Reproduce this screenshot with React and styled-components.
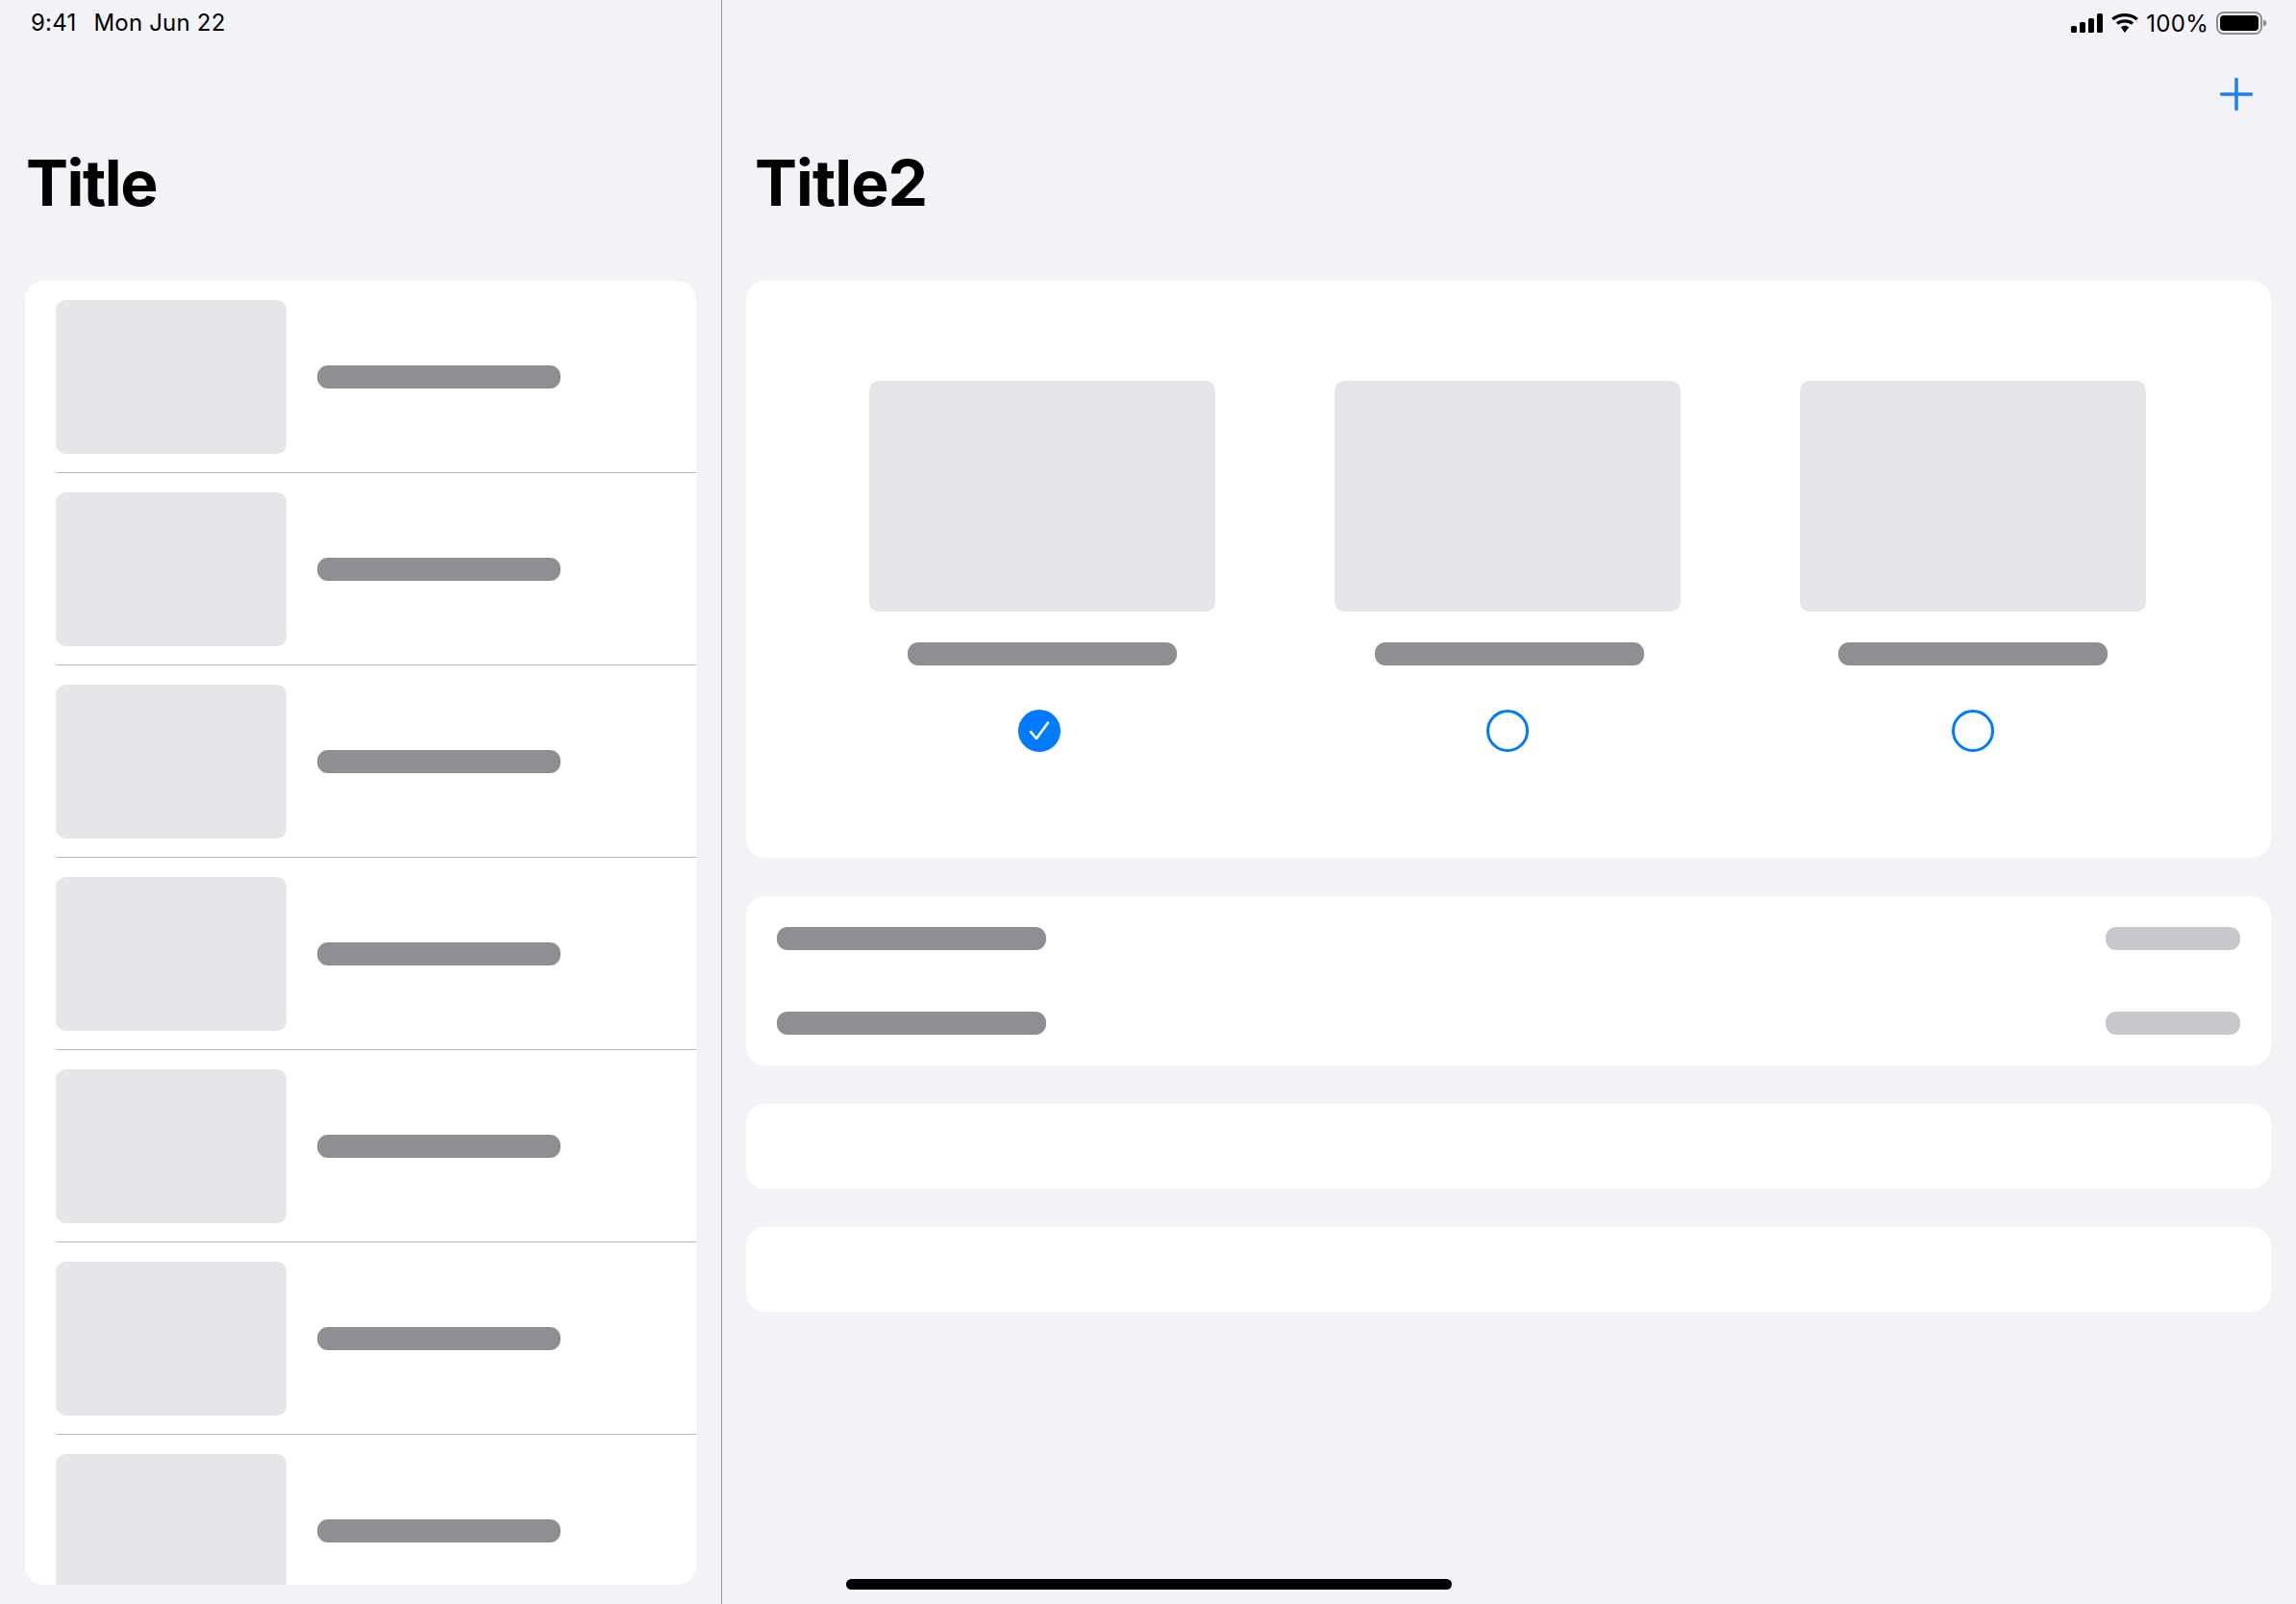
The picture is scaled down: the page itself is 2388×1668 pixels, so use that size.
import React from "react";
import styled, { createGlobalStyle } from "styled-components";

const Global = createGlobalStyle`
  html, body { margin: 0; padding: 0; background: #f2f2f7; }
  body { font-family: "Inter", "Liberation Sans", sans-serif; color: #000; }
  * { box-sizing: border-box; }
`;
const Page = styled.div`
  position: relative; display: flex; width: 2388px; height: 1668px; overflow: hidden; background: #f2f2f7;
`;
const Sidebar = styled.aside`
  width: 751px; height: 100%; flex: none; display: flex; flex-direction: column; border-right: 1px solid #9a9a9f;
  padding: 0 26px 20px 26px;
`;
const Main = styled.main`
  flex: 1; display: flex; flex-direction: column; padding: 0 26px 0 25px; min-width: 0;
`;
const StatusLeft = styled.div`
  height: 48px; display: flex; align-items: center; gap: 18px; padding-left: 6px; font-size: 24px; line-height: 48px; letter-spacing: 0.2px;
`;
const StatusRight = styled.div`
  height: 48px; display: flex; align-items: center; justify-content: flex-end; gap: 8px; margin-right: 4px; font-size: 24px; letter-spacing: 0.3px;
`;
const NavBar = styled.div`
  height: 100px; padding: 0 19px 0 0; display: flex; align-items: center; justify-content: flex-end;
`;
const Title = styled.h1`
  margin: 0; height: 144px; padding: 0 0 0 ${(p) => p.$inset}px; font-size: 66px; font-weight: 700; line-height: 84px; letter-spacing: ${(p) => p.$track}px;
`;
const ListCard = styled.div`
  flex: 1; min-height: 0; background: #fff; border-radius: 20px; overflow: hidden;
`;
const Row = styled.div`
  height: 200px; margin-left: 32px; padding: 20px 0; display: flex; align-items: center; gap: 32px; border-bottom: 1px solid #b9b9bd;
`;
const Thumb = styled.div`
  flex: none; width: ${(p) => p.$w}px; height: ${(p) => p.$h}px; background: #e5e5ea; border-radius: 10px;
`;
const Bar = styled.div`
  flex: none; width: ${(p) => p.$w}px; height: 24px; border-radius: 11px; background: ${(p) => (p.$light ? "#c7c7cc" : "#8e8e93")};
`;
const Card = styled.section`
  background: #fff; border-radius: 20px; margin-bottom: 40px;
`;
const PickerCard = styled(Card)`
  height: 600px; display: grid; grid-template-columns: repeat(3, 360px); column-gap: 124px; padding: 104px 0 0 128px;
`;
const Option = styled.div`
  display: flex; flex-direction: column; align-items: center;
`;
const OptionBar = styled(Bar)`
  margin-top: 32px; transform: translateX(${(p) => p.$shift}px);
`;
const Radio = styled.div`
  margin-top: 46px; width: 44px; height: 44px; border-radius: 50%; border: 3px solid #007aff;
  background: ${(p) => (p.$on ? "#007aff" : "transparent")}; display: flex; align-items: center; justify-content: center;
  transform: translateX(${(p) => p.$shift}px);
`;
const InfoCard = styled(Card)`
  height: 176px; padding: 32px; display: flex; flex-direction: column; gap: 64px;
`;
const InfoRow = styled.div`display: flex; justify-content: space-between; align-items: center;`;
const EmptyCard = styled(Card)`height: 88px;`;
const HomeIndicator = styled.div`
  position: absolute; left: 880px; top: 1642px; width: 630px; height: 11px; border-radius: 6px; background: #000;
`;

const Signal = () => (
  <svg width="33" height="20" viewBox="0 0 33 20" style={{ marginRight: 1 }}>
    <rect x="0" y="13" width="6" height="7" rx="1.6" /><rect x="9" y="9" width="6" height="11" rx="1.6" />
    <rect x="18" y="5" width="6" height="15" rx="1.6" /><rect x="27" y="0" width="6" height="20" rx="1.6" />
  </svg>
);
const Wifi = () => (
  <svg width="28" height="20" viewBox="1.5 0 25 20" preserveAspectRatio="none">
    <path d="M14 3.2c4 0 7.6 1.5 10.3 4l2.1-2.3C23.1 1.9 18.8 0 14 0S4.900 1.900 1.600 4.900l2.100 2.300C6.400 4.700 10 3.200 14 3.200z" />
    <path d="M14 9.500c2.300 0 4.400.9 6 2.300l2.200-2.300C20 7.500 17.100 6.300 14 6.300s-6 1.200-8.200 3.200L8 11.800c1.600-1.400 3.700-2.300 6-2.300z" />
    <path d="M14 12.700c-1.500 0-2.800.6-3.800 1.500L14 20l3.800-5.800c-1-.9-2.300-1.500-3.800-1.500z" />
  </svg>
);
const Battery = () => (
  <svg width="53" height="24" viewBox="0 0 53 24">
    <rect x="1" y="1" width="46" height="22" rx="6.500" fill="none" stroke="#8e8e93" strokeWidth="2" />
    <rect x="4" y="4" width="40" height="16" rx="4" fill="#000" />
    <path d="M49 8.500c2 .5 3.500 1.900 3.500 3.500s-1.500 3-3.500 3.500z" fill="#8e8e93" />
  </svg>
);
const Plus = () => (
  <svg width="34" height="34" viewBox="0 0 34 34">
    <path d="M17 1.500v31M1.500 17h31" stroke="#1c7ff2" strokeWidth="3.500" strokeLinecap="round" fill="none" />
  </svg>
);
const Check = () => (
  <svg width="24" height="22" viewBox="0 0 24 22">
    <path d="M3 12l6 7L21 2.500" stroke="#fff" strokeWidth="2.600" strokeLinecap="round" strokeLinejoin="round" fill="none" />
  </svg>
);

const opts = [
  { barShift: 0, radioShift: -3, on: true },
  { barShift: 2, radioShift: 0, on: false },
  { barShift: 0, radioShift: 0, on: false },
];

export default function App() {
  return (
    <Page>
      <Global />
      <Sidebar>
        <StatusLeft><span>9:41</span><span>Mon Jun 22</span></StatusLeft>
        <NavBar />
        <Title $inset={1} $track={-1.5}>Title</Title>
        <ListCard>
          {Array.from({ length: 7 }, (_, i) => (
            <Row key={i}><Thumb $w={240} $h={160} /><Bar $w={253} /></Row>
          ))}
        </ListCard>
      </Sidebar>
      <Main>
        <StatusRight><Signal /><Wifi /><span>100%</span><Battery /></StatusRight>
        <NavBar><Plus /></NavBar>
        <Title $inset={9} $track={-1}>Title2</Title>
        <PickerCard>
          {opts.map((o, i) => (
            <Option key={i}>
              <Thumb $w={360} $h={240} />
              <OptionBar $w={280} $shift={o.barShift} />
              <Radio $on={o.on} $shift={o.radioShift}>{o.on && <Check />}</Radio>
            </Option>
          ))}
        </PickerCard>
        <InfoCard>
          <InfoRow><Bar $w={280} /><Bar $w={140} $light /></InfoRow>
          <InfoRow><Bar $w={280} /><Bar $w={140} $light /></InfoRow>
        </InfoCard>
        <EmptyCard />
        <EmptyCard />
      </Main>
      <HomeIndicator />
    </Page>
  );
}
